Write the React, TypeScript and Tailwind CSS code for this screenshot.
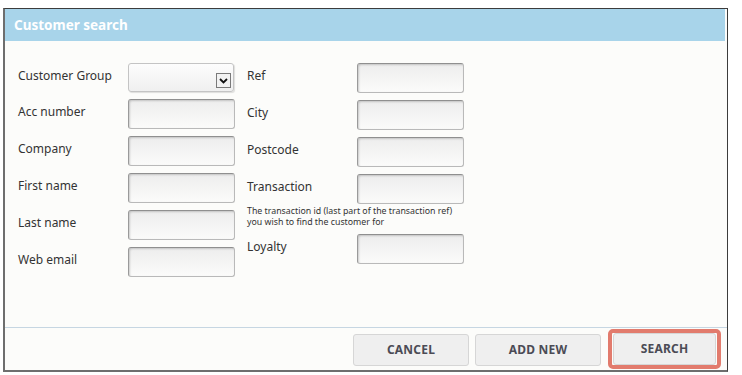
import React from 'react';

const font = { fontFamily: '"Noto Sans", "Open Sans", sans-serif' };

const inputCls =
  'block w-[107px] h-[30px] rounded-[3px] border border-[#b9b9b9] border-t-[#8f8f8f] border-l-[#9a9a9a] bg-gradient-to-b from-[#ededed] to-[#fbfbfa] shadow-[inset_1px_1px_2px_rgba(0,0,0,0.18)]';

const Field: React.FC<{ label: string; last?: boolean }> = ({ label, last }) => (
  <div className={`flex items-start ${last ? '' : 'mb-[7px]'}`}>
    <label className="w-[110px] shrink-0 pt-[5px] text-[12px] leading-[16px] text-[#333]">{label}</label>
    <input className={inputCls} />
  </div>
);

const SelectField: React.FC<{ label: string }> = ({ label }) => (
  <div className="flex items-start mb-[7px]">
    <label className="w-[110px] shrink-0 pt-[5px] text-[12px] leading-[16px] text-[#333]">{label}</label>
    <div className="relative w-[106px] h-[29px] rounded-[3px] border border-[#c4c4c4] bg-gradient-to-b from-[#fdfdfd] to-[#efefef] shadow-[1px_1px_1px_rgba(0,0,0,0.12)]">
      <div className="absolute right-[2px] top-[9px] w-[15px] h-[15px] border border-[#7a7a7a] bg-[#f2f2f2] flex items-center justify-center">
        <svg width="9" height="6" viewBox="0 0 9 6">
          <path d="M1 1 L4.5 4.5 L8 1" fill="none" stroke="#111" strokeWidth="1.8" />
        </svg>
      </div>
    </div>
  </div>
);

const buttonCls =
  'h-[32px] rounded-[3px] border border-[#d6d6d6] bg-[#efefef] text-[12px] font-bold text-[#4b4b55] tracking-[0.2px]';

export default function App() {
  return (
    <div className="w-[742px] h-[375px] bg-white pt-[8px] pl-[3px]" style={font}>
      <div className="w-[725px] h-[364px] flex flex-col bg-[#fcfcfa] border border-[#3c3c3c] border-l-2 border-l-[#6e6e6e] border-b-2 border-b-[#6e6e6e]">
        <div className="h-[32px] mr-[2px] bg-[#a8d4ea] flex items-center pl-[9px] shrink-0">
          <span className="text-[13.5px] font-bold text-white">Customer search</span>
        </div>

        <div className="flex-1 flex pt-[22px] pl-[13px]">
          <div className="w-[229px]">
            <SelectField label="Customer Group" />
            <Field label="Acc number" />
            <Field label="Company" />
            <Field label="First name" />
            <Field label="Last name" />
            <Field label="Web email" last />
          </div>
          <div>
            <Field label="Ref" />
            <Field label="City" />
            <Field label="Postcode" />
            <Field label="Transaction" last />
            <p className="pt-[2px] pb-[6px] text-[8.8px] leading-[11px] text-[#333]">
              The transaction id (last part of the transaction ref)
              <br />
              you wish to find the customer for
            </p>
            <Field label="Loyalty" last />
          </div>
        </div>

        <div className="h-[43px] shrink-0 border-t border-[#c6d6e2] flex items-start justify-end pr-[6px] pt-[1px]">
          <button className={`${buttonCls} w-[116px] mt-[5px]`}>CANCEL</button>
          <button className={`${buttonCls} w-[126px] mt-[5px] ml-[6px]`}>ADD NEW</button>
          <div className="ml-[7px] border-4 border-[#e27b6d] rounded-[5px] px-[1px]">
            <button className={`${buttonCls} w-[103px] h-[31px] block`}>SEARCH</button>
          </div>
        </div>
      </div>
    </div>
  );
}
